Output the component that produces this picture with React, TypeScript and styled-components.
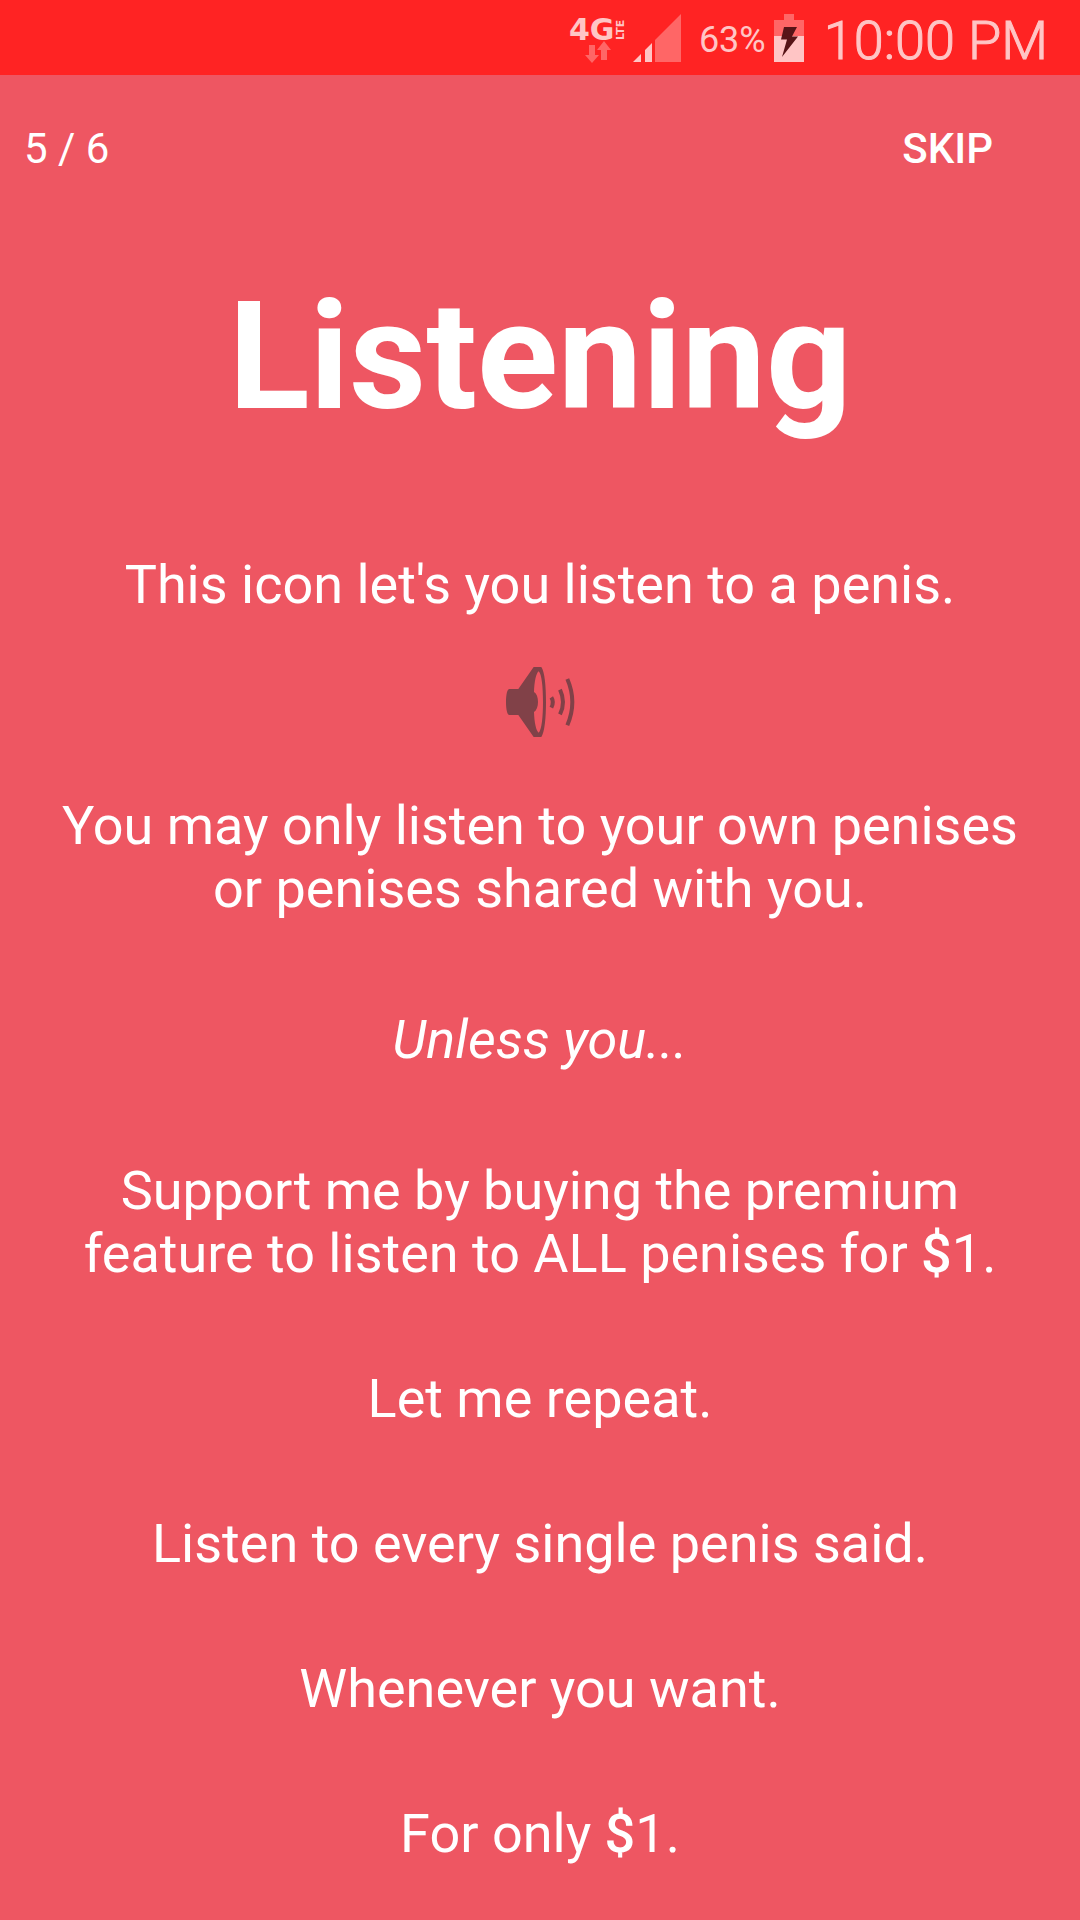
import React from "react";
import styled, { createGlobalStyle } from "styled-components";

const GlobalStyle = createGlobalStyle`
  *, *::before, *::after { box-sizing: border-box; }
  body {
    margin: 0;
    background: #ee5662;
    color: #ffffff;
    font-family: Roboto, "Noto Sans", sans-serif;
  }
`;

const Screen = styled.div`
  display: flex;
  flex-direction: column;
  min-height: 100vh;
`;

const StatusBar = styled.div`
  display: flex;
  align-items: center;
  justify-content: flex-end;
  height: 75px;
  padding-right: 32px;
  background: #ff2323;
  color: #ffc5c5;
`;

const StatusIcon = styled.svg<{ $gap: number }>`
  display: block;
  flex: none;
  margin-right: ${({ $gap }) => $gap}px;
`;

const BatteryLevel = styled.span`
  margin-right: 8px;
  padding-top: 4px;
  font-size: 36px;
  line-height: 42px;
`;

const Clock = styled.time`
  padding-top: 6px;
  font-size: 54px;
  font-weight: 300;
  line-height: 63px;
  -webkit-text-stroke: 1px currentColor;
`;

const TopBar = styled.header`
  display: flex;
  align-items: center;
  justify-content: space-between;
  height: 147px;
  padding: 0 87px 0 24px;
  font-size: 42px;
  line-height: 49px;
`;

const SkipButton = styled.button`
  margin: 0;
  padding: 0;
  border: 0;
  background: none;
  color: inherit;
  font: inherit;
  font-weight: 500;
  cursor: pointer;
`;

const Content = styled.main`
  display: flex;
  flex-direction: column;
  align-items: center;
  padding: 47px 40px 55px;
  text-align: center;
`;

const Title = styled.h1`
  margin: 0 0 108px;
  font-size: 150px;
  font-weight: 700;
  line-height: 176px;
`;

const Paragraph = styled.p<{ $gap?: number; $italic?: boolean }>`
  max-width: 980px;
  margin: 0 0 ${({ $gap = 82 }) => $gap}px;
  font-size: 54px;
  font-style: ${({ $italic }) => ($italic ? "italic" : "normal")};
  line-height: 63px;

  &:last-child { margin-bottom: 0; }
`;

const Currency = styled.span`
  font-weight: 500;
`;

const Speaker = styled.svg`
  display: block;
  width: 72px;
  height: 70px;
  margin-bottom: 57px;
`;

function NetworkIcon() {
  return (
    <StatusIcon $gap={6} width="60" height="52" viewBox="0 0 60 52" role="img" aria-label="4G LTE">
      <g fill="#ffc5c5" fontFamily='"DejaVu Sans", sans-serif' fontWeight="700">
        <text x="2" y="28" fontSize="30">4G</text>
        <text transform="translate(57 28) rotate(-90)" fontSize="11">LTE</text>
      </g>
      <path fill="#ff6666" d="M22 33h6v10h4l-7 8-7-8h4zM34 48h6V38h4l-7-9-7 9h4z" />
    </StatusIcon>
  );
}

function SignalIcon() {
  return (
    <StatusIcon $gap={18} width="48" height="48" viewBox="0 0 48 48" role="img" aria-label="Signal strength">
      <path fill="#ff6666" d="M22 26 48 0v48H22z" />
      <path fill="#ffc5c5" d="M12 36 19 29v19h-7zM0 48l8-8v8z" />
    </StatusIcon>
  );
}

function BatteryIcon() {
  return (
    <StatusIcon $gap={20} width="30" height="48" viewBox="0 0 30 48" role="img" aria-label="Charging">
      <path fill="#ff6666" d="M0 6h10V0h10v6h10v16H0z" />
      <path fill="#ffc5c5" d="M0 22h30v26H0z" />
      <path fill="#571417" d="M10 13h13l-5 9.500h6L8 43l5-17.500H7z" />
    </StatusIcon>
  );
}

function SpeakerIcon() {
  return (
    <Speaker viewBox="42 51 216 210" role="img" aria-label="Listen">
      <path
        fill="#814148"
        fillRule="evenodd"
        d="M131 51h23c10 14 14 58 14 105s-4 91-14 105h-23L85 195H58c-6 0-10-16-10-39s4-39 10-39h27zM146 64c-8 6-13 32-14 62 8 5 12 16 12 30s-4 25-12 30c1 30 6 56 14 62 9-8 13-47 13-92s-4-84-13-92z"
      />
      <g fill="none" stroke="#814148" strokeWidth="12">
        <path d="M184 142q9 14 0 31" />
        <path d="M210 119q18 38 0 74" />
        <path d="M232 87q30 69 0 139" />
      </g>
    </Speaker>
  );
}

export default function App() {
  return (
    <>
      <GlobalStyle />
      <Screen>
        <StatusBar>
          <NetworkIcon />
          <SignalIcon />
          <BatteryLevel>63%</BatteryLevel>
          <BatteryIcon />
          <Clock>10:00 PM</Clock>
        </StatusBar>
        <TopBar>
          <span>5 / 6</span>
          <SkipButton type="button">SKIP</SkipButton>
        </TopBar>
        <Content>
          <Title>Listening</Title>
          <Paragraph $gap={51}>This icon let's you listen to a penis.</Paragraph>
          <SpeakerIcon />
          <Paragraph $gap={88}>You may only listen to your own penises or penises shared with you.</Paragraph>
          <Paragraph $gap={88} $italic>Unless you...</Paragraph>
          <Paragraph>
            Support me by buying the premium feature to listen to ALL penises for <Currency>$</Currency>1.
          </Paragraph>
          <Paragraph>Let me repeat.</Paragraph>
          <Paragraph>Listen to every single penis said.</Paragraph>
          <Paragraph>Whenever you want.</Paragraph>
          <Paragraph>
            For only <Currency>$</Currency>1.
          </Paragraph>
        </Content>
      </Screen>
    </>
  );
}
